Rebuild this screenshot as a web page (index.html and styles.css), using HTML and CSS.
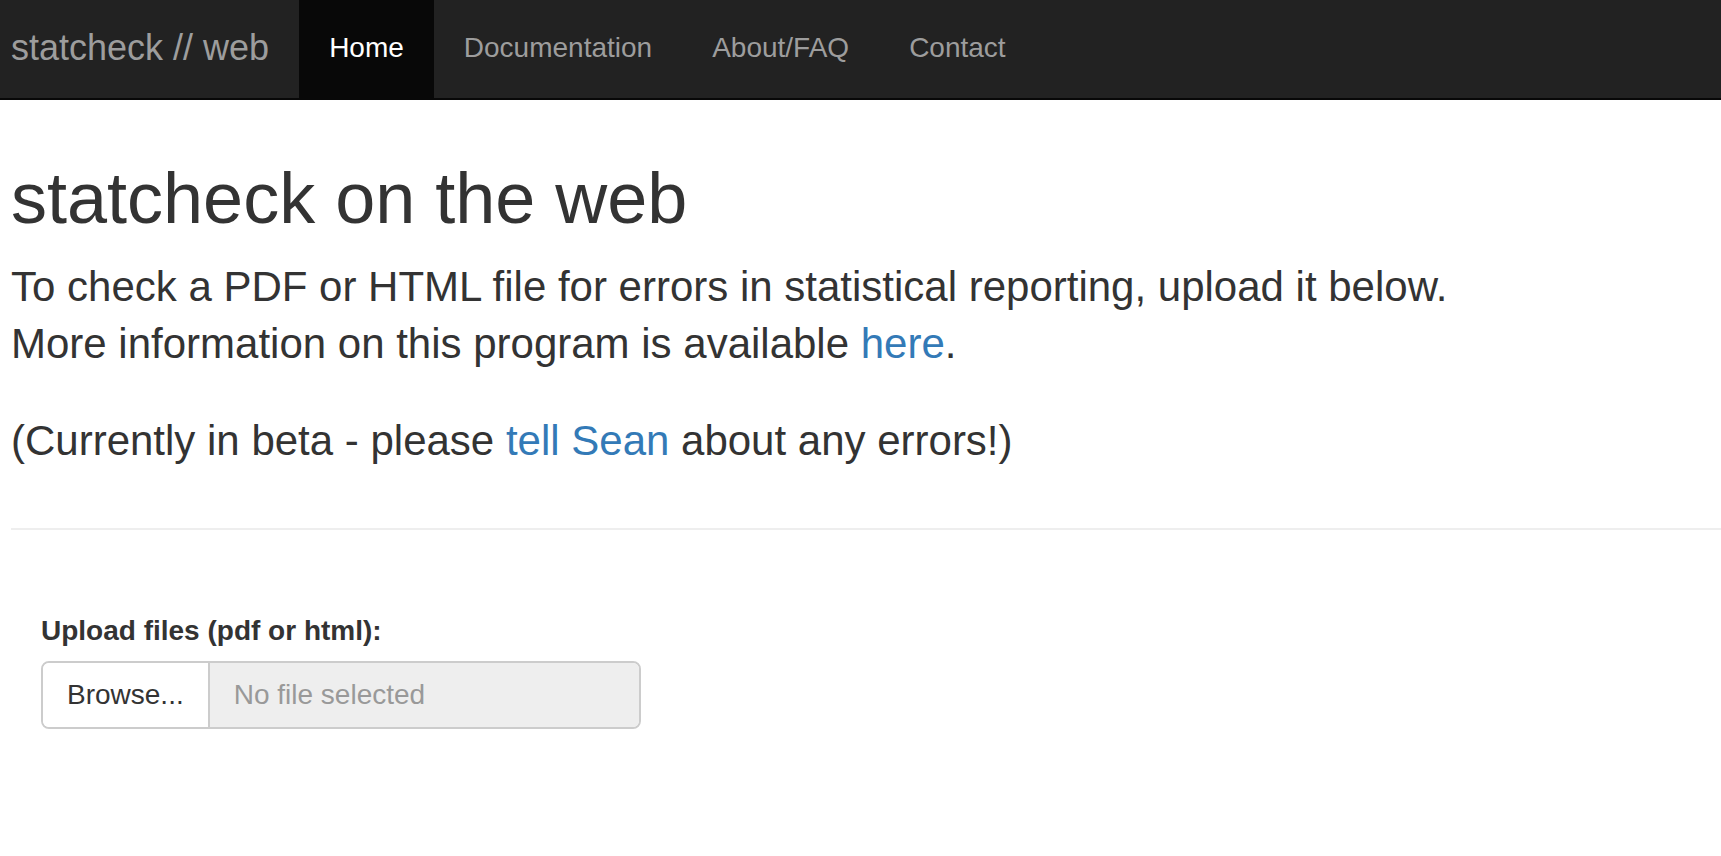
FILE: index.html
```html
<!DOCTYPE html>
<html lang="en">
<head>
<meta charset="utf-8">
<title>statcheck // web</title>
<link rel="stylesheet" href="styles.css">
</head>
<body>
<nav class="navbar">
  <span class="brand">statcheck // web</span>
  <ul class="nav">
    <li class="nav-item active"><a href="#">Home</a></li>
    <li class="nav-item"><a href="#">Documentation</a></li>
    <li class="nav-item"><a href="#">About/FAQ</a></li>
    <li class="nav-item"><a href="#">Contact</a></li>
  </ul>
</nav>
<main class="container">
  <h1 class="title">statcheck on the web</h1>
  <p class="lead">To check a PDF or HTML file for errors in statistical reporting, upload it below.<br>More information on this program is available <a href="#">here</a>.</p>
  <p class="lead lead-last">(Currently in beta - please <a href="#">tell Sean</a> about any errors!)</p>
  <hr class="divider">
  <div class="form-group">
    <label class="label">Upload files (pdf or html):</label>
    <div class="input-group">
      <span class="browse">Browse...</span>
      <span class="file-name">No file selected</span>
    </div>
  </div>
</main>
</body>
</html>
```
FILE: styles.css
```css
html, body {
  margin: 0;
  padding: 0;
  background: #fff;
}
body {
  font-family: "Liberation Sans", Arial, sans-serif;
  color: #333;
}
a {
  color: #337ab7;
  text-decoration: none;
}

.navbar {
  display: flex;
  align-items: stretch;
  height: 98px;
  background: #222;
  border-bottom: 2px solid #080808;
}
.brand {
  display: block;
  padding: 28px 30px 30px 11px;
  font-size: 36px;
  line-height: 40px;
  color: #9d9d9d;
}
.nav {
  display: flex;
  list-style: none;
  margin: 0;
  padding: 0;
}
.nav-item a {
  display: block;
  padding: 28px 30px 30px;
  font-size: 28px;
  line-height: 40px;
  color: #9d9d9d;
}
.nav-item.active a {
  background: #080808;
  color: #fff;
}

.container {
  padding: 0 0 0 11px;
}
.title {
  margin: 59px 0 20px;
  font-size: 72px;
  font-weight: 500;
  line-height: 1.1;
  color: #333;
}
.lead {
  margin: 0 0 40px;
  font-size: 42px;
  line-height: 57px;
  font-weight: 300;
}
.lead-last {
  margin-bottom: 0;
}
.divider {
  margin: 59px 0 81px;
  border: 0;
  border-top: 2px solid #eee;
  height: 0;
}
.form-group {
  padding-left: 30px;
}
.label {
  display: block;
  margin-bottom: 10px;
  font-size: 28px;
  line-height: 40px;
  font-weight: 700;
}
.input-group {
  display: flex;
  width: 600px;
  height: 68px;
  box-sizing: border-box;
  border: 2px solid #ccc;
  border-radius: 8px;
  overflow: hidden;
  font-size: 28px;
}
.browse {
  display: flex;
  align-items: center;
  padding: 0 24px;
  background: #fff;
  color: #333;
  border-right: 2px solid #ccc;
}
.file-name {
  display: flex;
  align-items: center;
  flex: 1;
  padding: 0 24px;
  background: #eee;
  color: #999;
}
```
